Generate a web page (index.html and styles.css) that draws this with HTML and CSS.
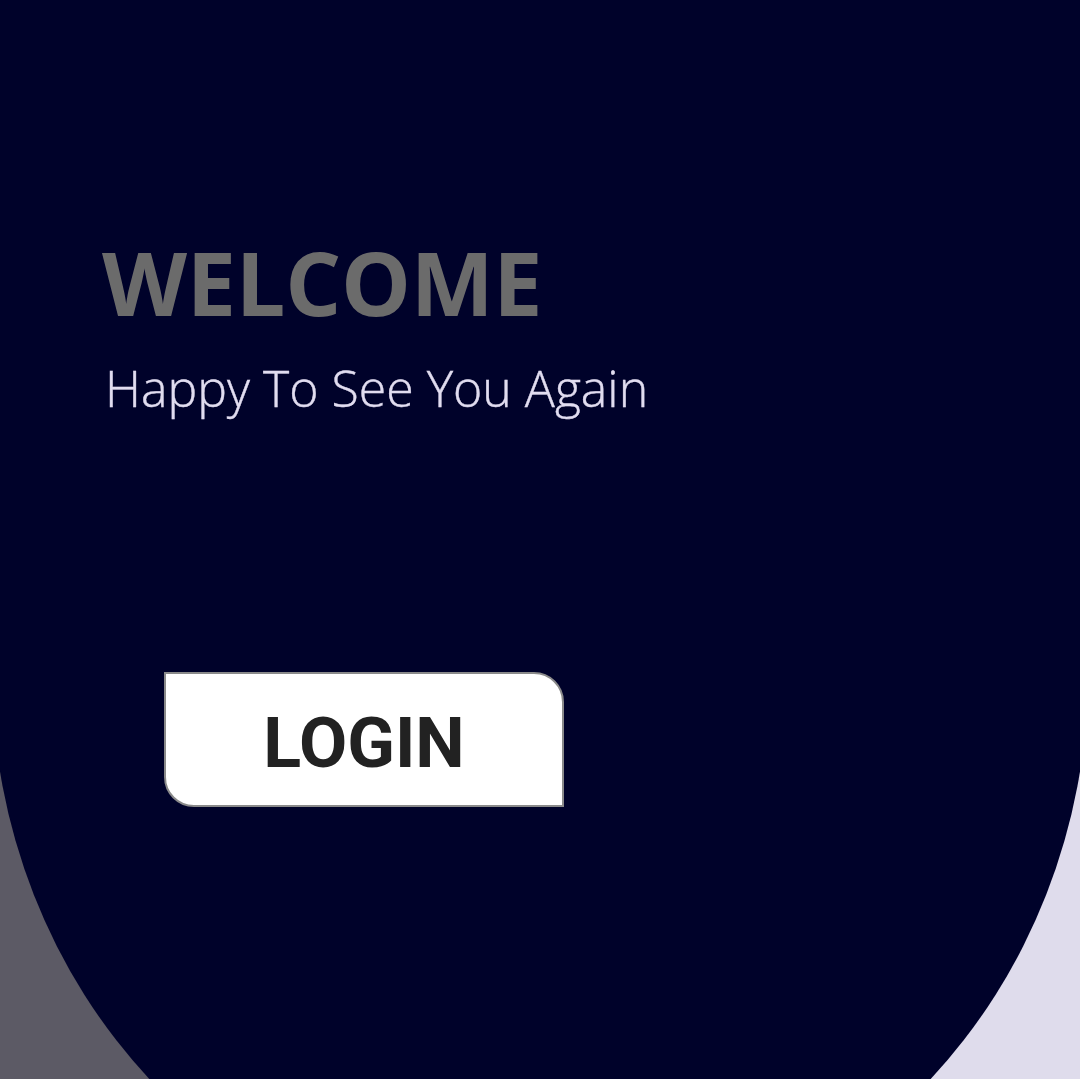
FILE: index.html
```html
<!DOCTYPE html>
<html>
<head>
<meta charset="utf-8">
<link rel="stylesheet" href="styles.css">
</head>
<body>
<div class="screen">
  <div class="blob"></div>
  <main class="content">
    <h1 class="title">WELCOME</h1>
    <p class="subtitle">Happy To See You Again</p>
    <button class="login">LOGIN</button>
  </main>
</div>
</body>
</html>
```
FILE: styles.css
```css
html, body {
  margin: 0;
  padding: 0;
}
.screen {
  position: relative;
  width: 1080px;
  height: 1079px;
  overflow: hidden;
  background: linear-gradient(90deg, #5c5a65 0 50%, #dfdcec 50% 100%);
}
.blob {
  position: absolute;
  left: -8px;
  top: 0;
  width: 1096px;
  height: 1252px;
  background: #00022a;
  border-radius: 0 0 548px 548px / 0 0 579px 579px;
}
.content {
  position: relative;
  display: flex;
  flex-direction: column;
  align-items: flex-start;
  padding: 228px 0 0 102px;
}
.title {
  margin: 0;
  font-family: "Open Sans", "Noto Sans", sans-serif;
  font-weight: 700;
  font-size: 88px;
  line-height: 108px;
  color: #6b6b6b;
  letter-spacing: -0.3px;
}
.subtitle {
  margin: 22px 0 0 3px;
  font-family: "Open Sans", "Noto Sans", sans-serif;
  font-weight: 300;
  font-size: 50px;
  line-height: 60px;
  color: #e1ddf0;
  -webkit-text-stroke: 0.4px #e1ddf0;
}
.login {
  margin: 254px 0 0 62px;
  width: 400px;
  height: 135px;
  box-sizing: border-box;
  border: 2px solid #8a8a8a;
  background: #ffffff;
  border-radius: 0 30px 0 30px;
  font-family: "Roboto", sans-serif;
  font-weight: 700;
  font-size: 70px;
  color: #222222;
  padding: 6px 0 0 0;
  line-height: 1;
}
```
